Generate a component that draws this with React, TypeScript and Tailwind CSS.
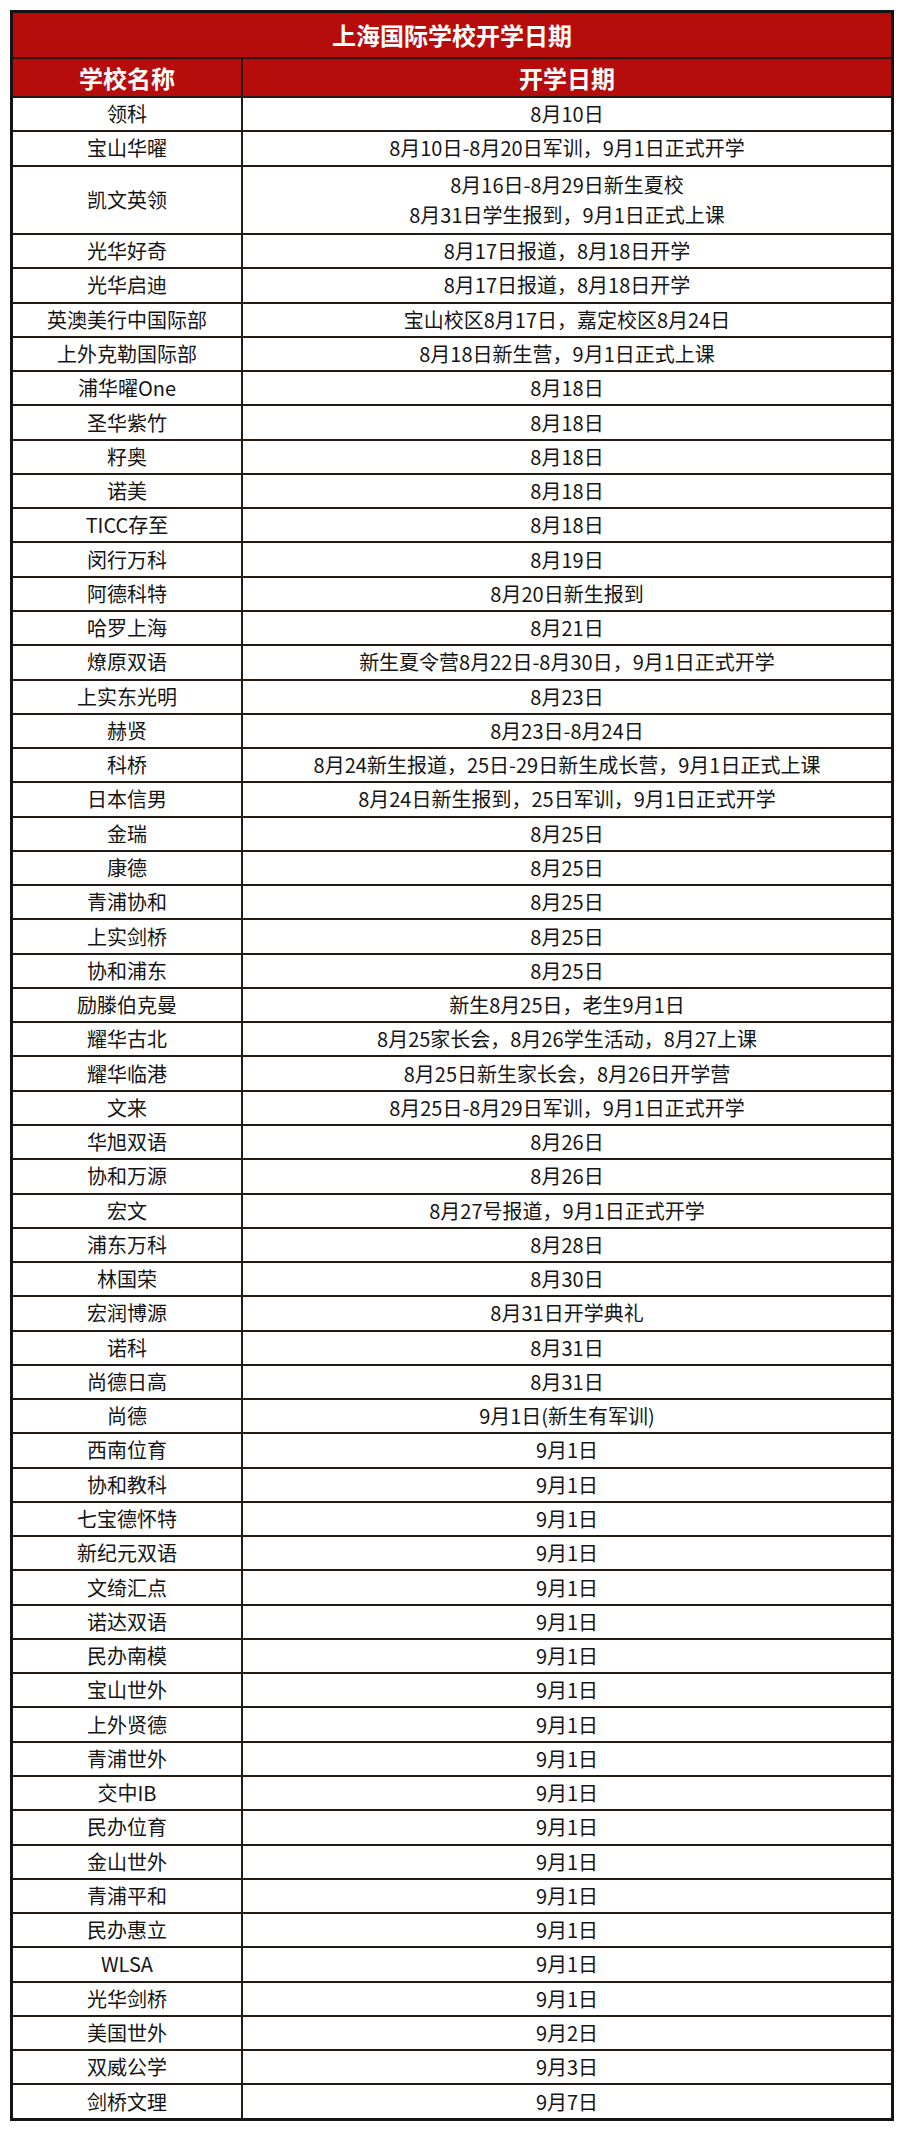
import React from "react";

const rows: [string, string[]][] = [
  ["领科", ["8月10日"]],
  ["宝山华曜", ["8月10日-8月20日军训，9月1日正式开学"]],
  ["凯文英领", ["8月16日-8月29日新生夏校", "8月31日学生报到，9月1日正式上课"]],
  ["光华好奇", ["8月17日报道，8月18日开学"]],
  ["光华启迪", ["8月17日报道，8月18日开学"]],
  ["英澳美行中国际部", ["宝山校区8月17日，嘉定校区8月24日"]],
  ["上外克勒国际部", ["8月18日新生营，9月1日正式上课"]],
  ["浦华曜One", ["8月18日"]],
  ["圣华紫竹", ["8月18日"]],
  ["籽奥", ["8月18日"]],
  ["诺美", ["8月18日"]],
  ["TICC存至", ["8月18日"]],
  ["闵行万科", ["8月19日"]],
  ["阿德科特", ["8月20日新生报到"]],
  ["哈罗上海", ["8月21日"]],
  ["燎原双语", ["新生夏令营8月22日-8月30日，9月1日正式开学"]],
  ["上实东光明", ["8月23日"]],
  ["赫贤", ["8月23日-8月24日"]],
  ["科桥", ["8月24新生报道，25日-29日新生成长营，9月1日正式上课"]],
  ["日本信男", ["8月24日新生报到，25日军训，9月1日正式开学"]],
  ["金瑞", ["8月25日"]],
  ["康德", ["8月25日"]],
  ["青浦协和", ["8月25日"]],
  ["上实剑桥", ["8月25日"]],
  ["协和浦东", ["8月25日"]],
  ["励滕伯克曼", ["新生8月25日，老生9月1日"]],
  ["耀华古北", ["8月25家长会，8月26学生活动，8月27上课"]],
  ["耀华临港", ["8月25日新生家长会，8月26日开学营"]],
  ["文来", ["8月25日-8月29日军训，9月1日正式开学"]],
  ["华旭双语", ["8月26日"]],
  ["协和万源", ["8月26日"]],
  ["宏文", ["8月27号报道，9月1日正式开学"]],
  ["浦东万科", ["8月28日"]],
  ["林国荣", ["8月30日"]],
  ["宏润博源", ["8月31日开学典礼"]],
  ["诺科", ["8月31日"]],
  ["尚德日高", ["8月31日"]],
  ["尚德", ["9月1日(新生有军训)"]],
  ["西南位育", ["9月1日"]],
  ["协和教科", ["9月1日"]],
  ["七宝德怀特", ["9月1日"]],
  ["新纪元双语", ["9月1日"]],
  ["文绮汇点", ["9月1日"]],
  ["诺达双语", ["9月1日"]],
  ["民办南模", ["9月1日"]],
  ["宝山世外", ["9月1日"]],
  ["上外贤德", ["9月1日"]],
  ["青浦世外", ["9月1日"]],
  ["交中IB", ["9月1日"]],
  ["民办位育", ["9月1日"]],
  ["金山世外", ["9月1日"]],
  ["青浦平和", ["9月1日"]],
  ["民办惠立", ["9月1日"]],
  ["WLSA", ["9月1日"]],
  ["光华剑桥", ["9月1日"]],
  ["美国世外", ["9月2日"]],
  ["双威公学", ["9月3日"]],
  ["剑桥文理", ["9月7日"]],
];

export default function App() {
  return (
    <div
      className="w-[904px] h-[2132px] bg-white pt-[10px] pl-[10px]"
      style={{ fontFamily: '"Noto Sans CJK SC", "Noto Sans", sans-serif' }}
    >
      <div className="w-[884px] border-[3px] border-[#141414] flex flex-col text-[#151515]">
        <div className="h-[44px] bg-[#b70c0c] flex items-center justify-center text-white text-[24px] font-bold leading-none">
          上海国际学校开学日期
        </div>
        <div className="h-[39px] bg-[#b70c0c] flex border-t-2 border-[#2a140c] text-white text-[24px] font-bold leading-none">
          <div className="w-[230px] shrink-0 flex items-center justify-center border-r-2 border-[#2a140c]">
            学校名称
          </div>
          <div className="flex-1 flex items-center justify-center">开学日期</div>
        </div>
        {rows.map(([name, dates], i) => (
          <div
            key={i}
            className={`${dates.length > 1 ? "h-[68.54px]" : "h-[34.27px]"} flex border-t-2 border-[#231a14] text-[20px] leading-none`}
          >
            <div className="w-[230px] shrink-0 flex items-center justify-center border-r-2 border-[#231a14]">
              {name}
            </div>
            <div className="flex-1 flex flex-col items-center justify-center gap-[10px]">
              {dates.map((d, j) => (
                <div key={j}>{d}</div>
              ))}
            </div>
          </div>
        ))}
      </div>
    </div>
  );
}
